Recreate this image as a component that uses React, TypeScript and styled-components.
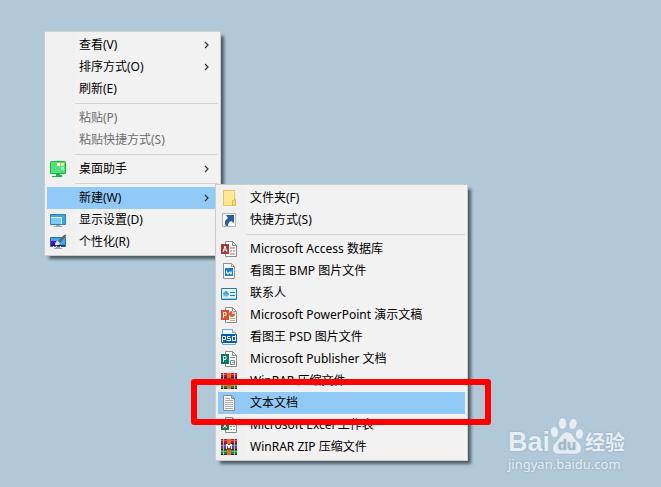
import React from "react";
import styled, { createGlobalStyle, css } from "styled-components";

const Global = createGlobalStyle`
  html, body, #root { height: 100%; }
  body {
    margin: 0;
    background: #b0c8d8;
    font-family: "Noto Sans", "Noto Sans CJK SC", sans-serif;
    overflow: hidden;
  }
`;

const Desktop = styled.main`
  position: relative;
  min-height: 100%;
  box-sizing: border-box;
  padding: 31px 44px;
`;

const menuSurface = css`
  box-sizing: border-box;
  margin: 0;
  padding: 2px;
  list-style: none;
  border: 1px solid #cccccc;
  background: linear-gradient(90deg, #f0f0f0 30px, #f2f2f2 30px);
  box-shadow: 4px 4px 3px -1px rgba(0, 0, 0, 0.55);
`;

const ContextMenu = styled.ul`
  ${menuSurface}
  width: 177px;
`;

const SubMenu = styled.ul`
  ${menuSurface}
  position: absolute;
  top: -3px;
  left: 168px;
  width: 253px;
  z-index: 1;
`;

const Entry = styled.li`
  position: relative;
`;

const Item = styled.button<{ $active?: boolean }>`
  display: flex;
  align-items: center;
  width: 100%;
  height: 22px;
  padding: 0 8px 0 3px;
  border: 0;
  background: ${(p) => (p.$active ? "#91c9f7" : "transparent")};
  color: #000000;
  font: inherit;
  font-size: 12px;
  line-height: 22px;
  text-align: left;
  white-space: nowrap;
  &:disabled { color: #6d6d6d; }
`;

const IconSlot = styled.span`
  display: flex;
  width: 16px;
  height: 16px;
  margin-right: 13px;
`;

const Label = styled.span`
  flex: 1;
`;

const Divider = styled.li`
  height: 1px;
  margin: 3px 0 3px 28px;
  background: #d4d4d4;
`;

const Highlight = styled.div`
  position: absolute;
  inset: -13px -26px -11px -27px;
  border: 6px solid #ff0000;
  border-radius: 3px;
  pointer-events: none;
  z-index: 2;
`;

const Watermark = styled.footer`
  position: absolute;
  right: 36px;
  bottom: 14px;
  color: #e6eef3;
  text-shadow: 0 0 2px rgba(90, 120, 140, 0.45);
`;

const Brand = styled.div`
  display: flex;
  align-items: flex-end;
  height: 38px;
`;

const Bai = styled.span`
  font: bold 27px/25px "Liberation Sans", sans-serif;
`;

const Jingyan = styled.span`
  font: bold 20px/26px "Noto Sans CJK SC", sans-serif;
`;

const Address = styled.div`
  font-size: 13px;
  line-height: 18px;
`;

const Svg = ({ children }: { children: React.ReactNode }) => (
  <svg width="16" height="16" viewBox="0 0 16 16" aria-hidden="true">{children}</svg>
);

const Chevron = () => (
  <svg width="6" height="8" viewBox="0 0 6 8" aria-hidden="true">
    <path d="M1 1l3 3-3 3" fill="none" stroke="#333" strokeWidth="1.2" />
  </svg>
);

const AssistantIcon = () => (
  <Svg>
    <path d="M.5 1.5q0-1 1-1h13q1 0 1 1v11h-15z" fill="#55e077" stroke="#12b84c" />
    <path d="M7 2h3v3H7z" fill="#fff" />
    <path d="M11 2h3v3h-3z" fill="#f4f36a" />
    <path d="M11 6h3v3h-3z" fill="#a5f6ef" />
    <path d="M6 13h4v1h2v2H2v-1h4z" fill="#12b84c" />
  </Svg>
);

const DisplayIcon = () => (
  <Svg>
    <path d="M.5 2.5h15v10H.5z" fill="#31a9ee" stroke="#3c7fae" />
    <path d="M1 5h11v7h-1V6H1z" fill="#f2fbff" />
    <path d="M1 6h10v6H1z" fill="#79cbf6" />
    <path d="M6 13h4v1h2v1H4v-1h2z" fill="#91a7b5" />
  </Svg>
);

const PersonalizeIcon = () => (
  <Svg>
    <path d="M.5 3.5h15v9H.5z" fill="#36a9ef" stroke="#316d9c" />
    <path d="M1 7h5v5H1z" fill="#5a00e0" />
    <path d="M1 11h14v1H1z" fill="#24136b" />
    <path d="M3 12h1v1H3zM6 12h1v1H6zM10 12h1v1h-1z" fill="#fff" />
    <path d="M5 11q0-4 3-4l2 2q-1 3-5 2z" fill="#e4e4e4" />
    <path d="M8 7l6-6q2-1 2 0v1l-6 7z" fill="#606469" />
    <path d="M6 13h4v1h2v1H4v-1h2z" fill="#91a7b5" />
  </Svg>
);

const FolderIcon = () => (
  <Svg>
    <path d="M2.5.5h11v15h-11z" fill="#ffe693" stroke="#e5c65c" />
    <path d="M11.5 10.5l3-1v6h-3z" fill="#f8d66d" stroke="#e0bb4d" />
    <path d="M12 1h1v9h-1z" fill="#fff0b4" />
  </Svg>
);

const ShortcutIcon = () => (
  <Svg>
    <path d="M1.5 1.5h13v13h-13z" fill="#f5f6f7" stroke="#b4b4b4" />
    <path d="M5 3h8v8l-3-2q-3 1-3 5H5q-3-5 2-8z" fill="#2b5d9f" />
  </Svg>
);

const Sheet = () => (
  <path d="M4.5.5h7l4 4v11h-11zM11.5.5v4h4" fill="#fff" stroke="#8b8b8b" />
);

const AccessIcon = () => (
  <Svg>
    <Sheet />
    <path d="M9 6h5v2H9zM9 9h2v2H9zM12 9h2v2h-2zM9 12h5v2H9z" fill="#eba6ad" />
    <path d="M0 3h8v10H0z" fill="#a4373a" />
    <path d="M2 11l2-6 2 6M3 9h2" stroke="#fff" fill="none" />
  </Svg>
);

const BmpIcon = () => (
  <Svg>
    <path d="M2.5.5h8l3 3v12h-11zM10.5.5v3h3" fill="#fff" stroke="#929292" />
    <path d="M4 5h8v8H4z" fill="#147fd4" />
    <path d="M5 7l2 3 2-2 1 2 1-3v3l-1 2-2-2-1 2-2-2z" fill="#e8f7ff" />
  </Svg>
);

const ContactIcon = () => (
  <Svg>
    <path d="M.5 3.5h15v11H.5z" fill="#d8f1fb" stroke="#2478b2" />
    <path d="M1 4h14v1H1z" fill="#fff" />
    <circle cx="5" cy="8" r="2" fill="#6b9d84" />
    <path d="M2 8q3-3 6 0v2q-3 3-6 0z" fill="#4ca5d5" opacity=".75" />
    <path d="M9 7h5v1H9zM9 10h5v1H9z" fill="#277cac" />
    <path d="M1 13h14v1H1z" fill="#8dccea" />
  </Svg>
);

const PowerPointIcon = () => (
  <Svg>
    <Sheet />
    <path d="M9 11h5v1H9zM9 13h5v1H9z" fill="#e49a80" />
    <circle cx="11" cy="7" r="3" fill="#bc6b46" />
    <path d="M11 4v3h3q0-3-3-3z" fill="#f0c7b4" />
    <path d="M0 3h8v10H0z" fill="#e04c26" />
    <path d="M2.5 11V5.5H5v3H2.5" stroke="#fff" fill="none" />
  </Svg>
);

const PsdIcon = () => (
  <Svg>
    <path d="M1.5 5.5v-5h10l3 3v12h-13z" fill="#e9f5fb" stroke="#71abd1" />
    <path d="M11.5.5v3h3" fill="#fff" stroke="#71abd1" />
    <path d="M0 6q0-1 1-1h14q1 0 1 1v7q0 1-1 1H1q-1 0-1-1z" fill="#0b5bab" />
    <path d="M1.5 13V7.5h3v3h-3M9.5 7.5h-3v2h3v2h-4M14.5 6v5.5h-3v-4h3" stroke="#fff" fill="none" />
  </Svg>
);

const PublisherIcon = () => (
  <Svg>
    <Sheet />
    <path d="M9 6.5h5M9.5 9.5h4v4h-4zM11 11.5h2" stroke="#71918b" fill="none" />
    <path d="M0 3h8v10H0z" fill="#077568" />
    <path d="M2.5 11V5.5H5v3H2.5" stroke="#fff" fill="none" />
  </Svg>
);

const ExcelIcon = () => (
  <Svg>
    <Sheet />
    <path d="M9 6h2v1H9zM12 6h2v1h-2zM9 9h2v1H9zM12 9h2v1h-2zM9 12h2v1H9zM12 12h2v1h-2z" fill="#66a780" />
    <path d="M0 3h8v10H0z" fill="#217346" />
    <path d="M2.5 5l3 6M5.5 5l-3 6" stroke="#fff" fill="none" />
  </Svg>
);

const RarIcon = ({ zip }: { zip?: boolean }) => (
  <Svg>
    <path d="M0 0h16v5H0z" fill="#b41843" />
    <path d="M0 5h16v6H0z" fill="#463fbb" />
    <path d="M0 11h16v5H0z" fill="#168346" />
    <path d="M0 1h16v1H0z" fill="#df5378" />
    <path d="M0 6h16v1H0z" fill="#8079e8" />
    <path d="M0 12h16v1H0z" fill="#49bd72" />
    <path d="M0 4h16v1H0zM0 10h16v1H0zM0 15h16v1H0z" fill="#282744" />
    <path d="M2 0h1v16H2zM13 0h1v16h-1z" fill="#d6b84f" />
    <path d="M6 0h4v16H6z" fill="#e66c20" />
    <path d="M5 5h6v6H5z" fill="#9e3c14" />
    <path d={zip ? "M5 5h2v1h2V5h2v5h-1V7H9v2H7V7H6v3H5z" : "M6 6h4v1H6zM6 9h4v1H6z"} fill="#fff" />
  </Svg>
);

const TextIcon = () => (
  <Svg>
    <path d="M2.5.5h8l3 3v12h-11zM10.5.5v3h3" fill="#fbfbfb" stroke="#8c8c8c" />
    <path d="M4 3.5h5M4 5.5h8M4 7.5h8M4 9.5h8M4 11.5h8M4 13.5h8" stroke="#a9a9a9" />
  </Svg>
);

const Paw = () => (
  <svg width="35" height="38" viewBox="0 0 35 38" aria-hidden="true">
    <g fill="#e6eef3" stroke="#9fb7c6" strokeWidth=".5">
      <ellipse cx="4.5" cy="15" rx="4" ry="5.5" transform="rotate(-8 4.5 15)" />
      <ellipse cx="12.5" cy="6.5" rx="4" ry="5.8" />
      <ellipse cx="23" cy="7" rx="4" ry="5.5" transform="rotate(12 23 7)" />
      <ellipse cx="29.5" cy="17" rx="4" ry="5.2" transform="rotate(8 29.5 17)" />
      <path d="M17 15c5 0 6 5 9 8 4 3 6 6 5 10-1 5-6 4-14 4S4 38 3 33c-1-4 1-6 4-9 3-3 5-9 10-9z" />
    </g>
    <text x="17" y="33" textAnchor="middle" fontFamily="Liberation Sans" fontSize="15" fontWeight="bold" fill="#a0bacb">du</text>
  </svg>
);

type Row = { label: string; icon?: React.ReactNode; active?: boolean; marked?: boolean } | null;

const newRows: Row[] = [
  { label: "文件夹(F)", icon: <FolderIcon /> },
  { label: "快捷方式(S)", icon: <ShortcutIcon /> },
  null,
  { label: "Microsoft Access 数据库", icon: <AccessIcon /> },
  { label: "看图王 BMP 图片文件", icon: <BmpIcon /> },
  { label: "联系人", icon: <ContactIcon /> },
  { label: "Microsoft PowerPoint 演示文稿", icon: <PowerPointIcon /> },
  { label: "看图王 PSD 图片文件", icon: <PsdIcon /> },
  { label: "Microsoft Publisher 文档", icon: <PublisherIcon /> },
  { label: "WinRAR 压缩文件", icon: <RarIcon /> },
  { label: "文本文档", icon: <TextIcon />, active: true, marked: true },
  { label: "Microsoft Excel 工作表", icon: <ExcelIcon /> },
  { label: "WinRAR ZIP 压缩文件", icon: <RarIcon zip /> },
];

type EntryProps = {
  label: string;
  icon?: React.ReactNode;
  active?: boolean;
  disabled?: boolean;
  arrow?: boolean;
  children?: React.ReactNode;
};

const MenuEntry = ({ label, icon, active, disabled, arrow, children }: EntryProps) => (
  <Entry role="none">
    <Item type="button" role="menuitem" $active={active} disabled={disabled} aria-haspopup={arrow ? "menu" : undefined}>
      <IconSlot>{icon}</IconSlot>
      <Label>{label}</Label>
      {arrow && <Chevron />}
    </Item>
    {children}
  </Entry>
);

export default function App() {
  return (
    <>
      <Global />
      <Desktop>
        <ContextMenu role="menu">
          <MenuEntry label="查看(V)" arrow />
          <MenuEntry label="排序方式(O)" arrow />
          <MenuEntry label="刷新(E)" />
          <Divider role="separator" />
          <MenuEntry label="粘贴(P)" disabled />
          <MenuEntry label="粘贴快捷方式(S)" disabled />
          <Divider role="separator" />
          <MenuEntry label="桌面助手" icon={<AssistantIcon />} arrow />
          <Divider role="separator" />
          <MenuEntry label="新建(W)" active arrow>
            <SubMenu role="menu">
              {newRows.map((row, i) =>
                row ? (
                  <MenuEntry key={i} label={row.label} icon={row.icon} active={row.active}>
                    {row.marked && <Highlight />}
                  </MenuEntry>
                ) : (
                  <Divider key={i} role="separator" />
                )
              )}
            </SubMenu>
          </MenuEntry>
          <MenuEntry label="显示设置(D)" icon={<DisplayIcon />} />
          <MenuEntry label="个性化(R)" icon={<PersonalizeIcon />} />
        </ContextMenu>
        <Watermark>
          <Brand>
            <Bai>Bai</Bai>
            <Paw />
            <Jingyan>经验</Jingyan>
          </Brand>
          <Address>jingyan.baidu.com</Address>
        </Watermark>
      </Desktop>
    </>
  );
}
